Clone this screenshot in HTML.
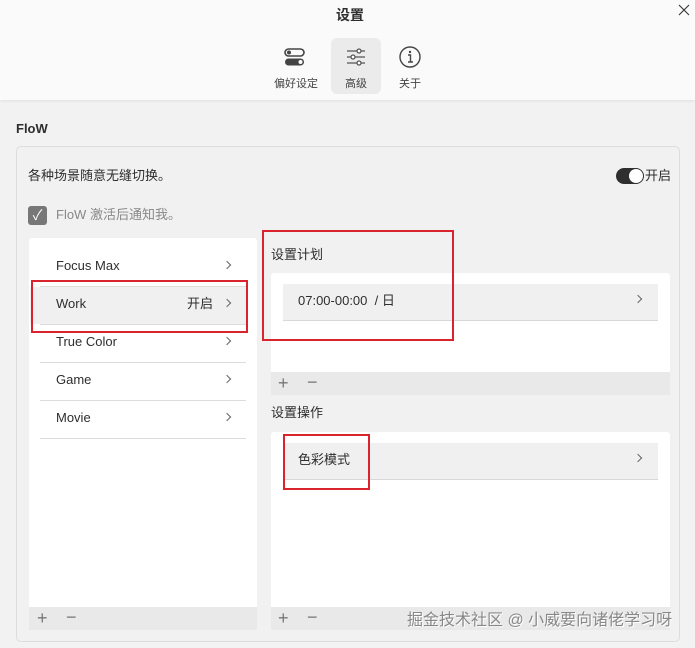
<!DOCTYPE html>
<html><head><meta charset="utf-8"><style>
*{box-sizing:border-box;margin:0;padding:0}
body{width:695px;height:648px;overflow:hidden;background:#f2f2f2;font-family:"Liberation Sans","Noto Sans CJK SC",sans-serif;color:#2e2e2e;position:relative;font-size:13px}
.a{position:absolute;line-height:18px}
.hdr{left:0;top:0;width:695px;height:100px;background:#fafafa;box-shadow:0 1px 3px rgba(0,0,0,.08)}
.chev{position:absolute;width:6px;height:6px;border-right:1.1px solid #666;border-top:1.1px solid #666;transform:rotate(45deg)}
.line{position:absolute;height:1px;background:#dcdcdc}
.red{position:absolute;border:2.5px solid #d9232d}
.bar{position:absolute;background:#e9e9e9;color:#777;font-size:18px}
</style></head><body>
<div class="a hdr"></div>
<div class="a" style="left:336px;top:6px;font-size:14px;font-weight:bold">设置</div>
<svg class="a" style="left:678px;top:4px" width="12" height="12" viewBox="0 0 12 12"><path d="M1 1L11 11M11 1L1 11" stroke="#333" stroke-width="1.1"/></svg>
<div class="a" style="left:331px;top:38px;width:50px;height:56px;background:#ebebeb;border-radius:6px"></div>
<svg class="a" style="left:283px;top:46px" width="24" height="24" viewBox="0 0 24 24"><rect x="2" y="3" width="19" height="7" rx="3.5" fill="none" stroke="#444" stroke-width="1.6"/><circle cx="6" cy="6.5" r="2" fill="#444"/><rect x="2" y="12.5" width="19" height="7" rx="3.5" fill="#444"/><circle cx="17.5" cy="16" r="2" fill="#fff"/></svg>
<svg class="a" style="left:344px;top:46px" width="24" height="24" viewBox="0 0 24 24" stroke="#555" stroke-width="1.3" fill="none"><path d="M3 5h18M3 11h18M3 17h18"/><circle cx="15" cy="5" r="2" fill="#fff"/><circle cx="9" cy="11" r="2" fill="#fff"/><circle cx="15" cy="17" r="2" fill="#fff"/></svg>
<svg class="a" style="left:398px;top:45px" width="24" height="24" viewBox="0 0 24 24"><circle cx="12" cy="12" r="10" fill="none" stroke="#444" stroke-width="1.4"/><circle cx="12" cy="7" r="1.2" fill="#444"/><path d="M10 10h2.5v7M10 17h5" stroke="#444" stroke-width="1.4" fill="none"/></svg>
<div class="a" style="left:274px;top:75px;font-size:11px;color:#444">偏好设定</div>
<div class="a" style="left:345px;top:75px;font-size:11px;color:#444">高级</div>
<div class="a" style="left:399px;top:75px;font-size:11px;color:#444">关于</div>
<div class="a" style="left:16px;top:120px;font-size:13px;font-weight:bold">FloW</div>
<div class="a" style="left:16px;top:146px;width:664px;height:496px;border:1px solid #ddd;border-radius:5px;background:#f1f1f1"></div>
<div class="a" style="left:28px;top:167px">各种场景随意无缝切换。</div>
<div class="a" style="left:616px;top:168px;width:28px;height:16px;border-radius:8px;background:#2f2f2f"></div>
<div class="a" style="left:629px;top:169px;width:14px;height:14px;border-radius:7px;background:#fff"></div>
<div class="a" style="left:645px;top:167px">开启</div>
<div class="a" style="left:28px;top:206px;width:19px;height:19px;border-radius:3px;background:#777;color:#fff;font-size:14px;text-align:center;line-height:19px">✓</div>
<div class="a" style="left:56px;top:206px;color:#888">FloW 激活后通知我。</div>
<div class="a" style="left:29px;top:238px;width:228px;height:392px;background:#fff;border-radius:3px"></div>
<div class="a" style="left:30px;top:287px;width:216px;height:37px;background:#f0f0f0"></div>
<div class="a" style="left:56px;top:257px">Focus Max</div><div class="chev" style="left:224px;top:262px"></div>
<div class="a" style="left:56px;top:295px">Work</div><div class="a" style="left:187px;top:295px">开启</div><div class="chev" style="left:224px;top:300px"></div>
<div class="a" style="left:56px;top:333px">True Color</div><div class="chev" style="left:224px;top:338px"></div>
<div class="a" style="left:56px;top:371px">Game</div><div class="chev" style="left:224px;top:376px"></div>
<div class="a" style="left:56px;top:409px">Movie</div><div class="chev" style="left:224px;top:414px"></div>
<div class="line" style="left:40px;top:286px;width:206px"></div>
<div class="line" style="left:40px;top:324px;width:206px"></div>
<div class="line" style="left:40px;top:362px;width:206px"></div>
<div class="line" style="left:40px;top:400px;width:206px"></div>
<div class="line" style="left:40px;top:438px;width:206px"></div>
<div class="bar" style="left:29px;top:607px;width:228px;height:23px"><span class="a" style="left:8px;top:2px">+</span><span class="a" style="left:37px;top:1px">−</span></div>
<div class="a" style="left:271px;top:246px">设置计划</div>
<div class="a" style="left:271px;top:273px;width:399px;height:122px;background:#fff;border-radius:3px"></div>
<div class="a" style="left:283px;top:284px;width:375px;height:37px;background:#f0f0f0;border-bottom:1px solid #d8d8d8"></div>
<div class="a" style="left:298px;top:292px">07:00-00:00 &nbsp;/ 日</div><div class="chev" style="left:635px;top:296px"></div>
<div class="bar" style="left:271px;top:372px;width:399px;height:23px"><span class="a" style="left:7px;top:2px">+</span><span class="a" style="left:36px;top:1px">−</span></div>
<div class="a" style="left:271px;top:404px">设置操作</div>
<div class="a" style="left:271px;top:432px;width:399px;height:198px;background:#fff;border-radius:3px"></div>
<div class="a" style="left:283px;top:443px;width:375px;height:37px;background:#f0f0f0;border-bottom:1px solid #d8d8d8"></div>
<div class="a" style="left:298px;top:451px">色彩模式</div><div class="chev" style="left:635px;top:455px"></div>
<div class="bar" style="left:271px;top:607px;width:399px;height:23px"><span class="a" style="left:7px;top:2px">+</span><span class="a" style="left:36px;top:1px">−</span></div>
<div class="a" style="left:407px;top:611px;font-size:16px;line-height:20px;color:#888;text-shadow:1px 1px 0 #fff;white-space:nowrap">掘金技术社区 @ 小威要向诸佬学习呀</div>
<div class="red" style="left:31px;top:280px;width:217px;height:53px"></div>
<div class="red" style="left:262px;top:230px;width:192px;height:111px"></div>
<div class="red" style="left:283px;top:434px;width:87px;height:56px"></div>
</body></html>
